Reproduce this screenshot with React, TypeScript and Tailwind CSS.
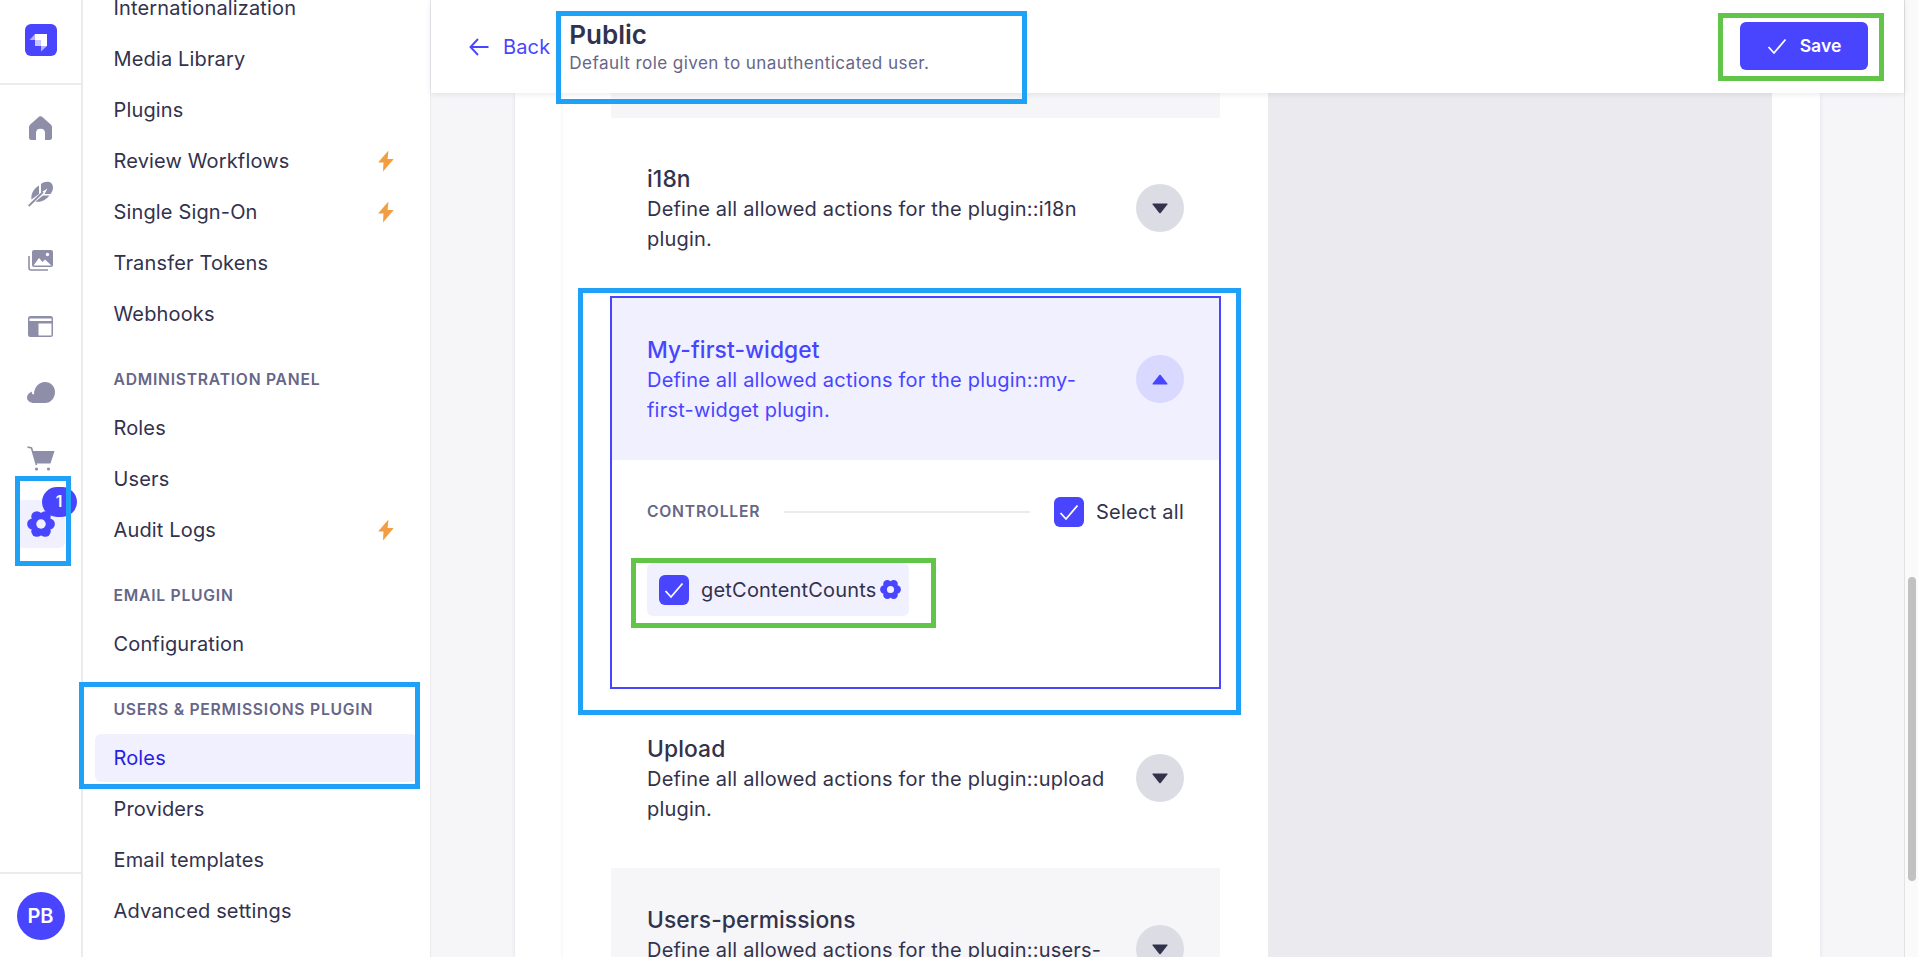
import React from "react";

const Gear = ({ size, hole, className }: { size: number; hole: string; className?: string }) => {
  const lobes = [0, 60, 120, 180, 240, 300].map((a) => {
    const r = (a * Math.PI) / 180;
    return { x: 13 + 7.7 * Math.cos(r), y: 13 + 7.7 * Math.sin(r) };
  });
  return (
    <svg width={size} height={size} viewBox="0 0 26 26" className={className}>
      {lobes.map((l, i) => (
        <circle key={i} cx={l.x} cy={l.y} r="5.2" fill="#4945ff" />
      ))}
      <circle cx="13" cy="13" r="8" fill="#4945ff" />
      <circle cx="13" cy="13" r="4.4" fill={hole} />
    </svg>
  );
};

const Bolt = () => (
  <svg width="16" height="22" viewBox="0 0 16 22" className="mr-[23px] ml-auto">
    <path d="M10.5 0.5 L0.5 12 Q0.2 12.6 1 12.6 H5.5 L5 21.5 L15.4 9.6 Q15.7 9 15 9 H9.6 Z" fill="#f29d41" />
  </svg>
);

const Check = ({ size = 20 }: { size?: number }) => (
  <svg width={size} height={size} viewBox="0 0 20 20" fill="none">
    <path d="M1.5 11 L7 17 L18.5 3.5" stroke="#fff" strokeWidth="1.8" />
  </svg>
);

const Box = () => (
  <span className="flex h-[30px] w-[30px] shrink-0 items-center justify-center rounded-[6px] bg-[#4945ff]">
    <Check size={20} />
  </span>
);

const Caret = ({ up, color }: { up?: boolean; color: string }) => (
  <svg width="16" height="11" viewBox="0 0 16 11" className={up ? "rotate-180" : ""}>
    <path d="M1 0.5 H15 Q15.9 0.5 15.4 1.4 L8.7 10 Q8 10.7 7.3 10 L0.6 1.4 Q0.1 0.5 1 0.5 Z" fill={color} />
  </svg>
);

const NavIcon = ({ children }: { children: React.ReactNode }) => (
  <div className="flex h-[48px] w-[48px] items-center justify-center">{children}</div>
);

const Item = ({ label, bolt, active }: { label: string; bolt?: boolean; active?: boolean }) => (
  <div
    className={
      active
        ? "mb-[3px] ml-[12px] mr-[13px] flex h-[48px] items-center rounded-[6px] bg-[#f0f0ff] pl-[18.5px] text-[20px] tracking-[0.15px] text-[#271fe0]"
        : "mb-[3px] ml-[12px] mr-[13px] flex h-[48px] items-center pl-[18.5px] text-[20px] tracking-[0.15px] text-[#32324d]"
    }
  >
    {label}
    {bolt && <Bolt />}
  </div>
);

const Label = ({ children }: { children: React.ReactNode }) => (
  <div className="mt-[29px] mb-[13px] flex h-[24px] items-center pl-[30.5px] pt-[2px] text-[15.7px] font-semibold tracking-[0.75px] text-[#666687]">
    {children}
  </div>
);

const Row = ({
  title,
  desc,
  open,
  grey,
  pt,
  h,
}: {
  title: string;
  desc: string;
  open?: boolean;
  grey?: boolean;
  pt: string;
  h: string;
}) => (
  <div
    className={`flex items-start justify-between ${open ? "px-[35px]" : "px-[36px]"} ${pt} ${h} ${
      open ? "bg-[#f0f0ff] text-[#4945ff]" : grey ? "bg-[#f6f6f9] text-[#32324d]" : "bg-white text-[#32324d]"
    }`}
  >
    <div className="w-[462px]">
      <div className="text-[22.8px] font-medium leading-[30px] tracking-[0.1px]">{title}</div>
      <div className="text-[20px] leading-[30px] tracking-[0.2px]">{desc}</div>
    </div>
    <div
      className={`mt-[20px] flex h-[48px] w-[48px] shrink-0 items-center justify-center rounded-full ${
        open ? "bg-[#d9d8ff]" : "bg-[#dcdce4]"
      }`}
    >
      <Caret up={open} color={open ? "#4945ff" : "#32324d"} />
    </div>
  </div>
);

export default function App() {
  return (
    <div className="relative flex h-[957px] w-[1918px] overflow-hidden bg-white [font-family:Inter,sans-serif]">
      {/* Main nav */}
      <nav className="flex w-[83px] shrink-0 flex-col border-r-2 border-[#eaeaef]">
        <div className="flex h-[85px] items-center justify-center border-b-2 border-[#eaeaef]">
          <svg width="32" height="32" viewBox="0 0 32 32" className="mb-[3px]">
            <rect width="32" height="32" rx="6" fill="#4945ff" />
            <path d="M10 10 H22 V22 H16 V16 H10 Z" fill="#fff" />
            <rect x="10" y="16" width="6" height="6" fill="#fff" opacity="0.7" />
            <path d="M10 10 V16 H4.5 Z" fill="#fff" opacity="0.6" />
            <path d="M16 22 H22 L16 27.5 Z" fill="#fff" opacity="0.6" />
          </svg>
        </div>
        <div className="flex flex-col items-center gap-[18px] pt-[19px]">
          <NavIcon>
            <svg width="23" height="24" viewBox="0 0 23 24">
              <path
                d="M10.2 .6 Q11.5 -.3 12.8 .6 L21.8 8.4 Q23 9.5 23 11 V21.5 Q23 24 20.5 24 H16 V17 Q16 12.7 11.5 12.7 Q7 12.7 7 17 V24 H2.5 Q0 24 0 21.5 V11 Q0 9.5 1.2 8.4 Z"
                fill="#8e8ea9"
              />
            </svg>
          </NavIcon>
          <NavIcon>
            <svg width="25" height="26" viewBox="0 0 25 26" fill="none">
              <path d="M3.5 18.5 C2.5 12.5 6 7.5 11 4.5 V13 Z" fill="#8e8ea9" />
              <path d="M13 11.5 V3 C17 -.5 25 -.5 25 6.5 C25 9 24 11 22.5 13 H16.5 L19.5 7.5 Z" fill="#8e8ea9" />
              <path d="M7.5 20.5 L15 14.5 H21.5 C18 18.5 13 22 7.5 20.5 Z" fill="#8e8ea9" />
              <path d="M.7 25 L15 11" stroke="#8e8ea9" strokeWidth="1.8" />
            </svg>
          </NavIcon>
          <NavIcon>
            <svg width="25" height="21" viewBox="0 0 25 21" fill="none">
              <path d="M1 6 V18 Q1 20 3 20 H20" stroke="#8e8ea9" strokeWidth="1.6" />
              <rect x="4" y="0" width="21" height="17" rx="2" fill="#8e8ea9" />
              <path d="M5.5 15.5 L11 8 L14.5 12 L17 9.5 L23.5 15.5 Z" fill="#fff" />
              <circle cx="19.5" cy="4.5" r="1.7" fill="#fff" />
            </svg>
          </NavIcon>
          <NavIcon>
            <svg width="25" height="21" viewBox="0 0 25 21">
              <rect width="25" height="21" rx="2.5" fill="#8e8ea9" />
              <rect x="1.5" y="2.5" width="22" height="2.5" fill="#fff" />
              <rect x="10.5" y="7.5" width="13" height="12" fill="#fff" />
            </svg>
          </NavIcon>
          <NavIcon>
            <svg width="28" height="21" viewBox="0 0 28 21">
              <path
                d="M7 21 C3 21 0 18.5 0 15.5 C0 12.5 2.5 10.5 5 9.5 C4.5 11 5 12.5 7 12.5 C7 5 12 0 18 0 C24 0 28 4.5 28 10 C28 16 24 21 18 21 Z"
                fill="#8e8ea9"
              />
            </svg>
          </NavIcon>
          <NavIcon>
            <svg width="28" height="25" viewBox="0 0 28 25" fill="none">
              <path d="M0.5 1 L4.5 2 L9.5 19" stroke="#8e8ea9" strokeWidth="1.6" />
              <path d="M5.5 5 H27.5 L23.5 17.5 H9.5 Z" fill="#8e8ea9" />
              <circle cx="9.5" cy="23" r="1.6" fill="#8e8ea9" />
              <circle cx="21.5" cy="23" r="1.6" fill="#8e8ea9" />
            </svg>
          </NavIcon>
          <div className="relative flex h-[48px] w-[48px] items-center justify-center rounded-[6px] bg-[#f0f0ff]">
            <Gear size={28} hole="#f0f0ff" />
            <span className="absolute -top-[13px] left-[25px] flex h-[30px] w-[35px] items-center justify-center rounded-full bg-[#4945ff] text-[15.7px] font-semibold text-white">
              1
            </span>
          </div>
        </div>
        <div className="mt-auto flex h-[85px] items-start justify-center border-t-2 border-[#eaeaef] pt-[18px]">
          <div className="flex h-[48px] w-[48px] items-center justify-center rounded-full bg-[#4945ff] text-[20px] font-semibold text-white">
            PB
          </div>
        </div>
      </nav>

      {/* Sub nav */}
      <aside className="w-[348px] shrink-0 overflow-hidden border-r border-[#eaeaef]">
        <div className="-mt-[16px]">
          <Item label="Internationalization" />
          <Item label="Media Library" />
          <Item label="Plugins" />
          <Item label="Review Workflows" bolt />
          <Item label="Single Sign-On" bolt />
          <Item label="Transfer Tokens" />
          <Item label="Webhooks" />
          <Label>ADMINISTRATION PANEL</Label>
          <Item label="Roles" />
          <Item label="Users" />
          <Item label="Audit Logs" bolt />
          <Label>EMAIL PLUGIN</Label>
          <Item label="Configuration" />
          <Label>USERS &amp; PERMISSIONS PLUGIN</Label>
          <Item label="Roles" active />
          <Item label="Providers" />
          <Item label="Email templates" />
          <Item label="Advanced settings" />
        </div>
      </aside>

      {/* Main */}
      <main className="flex min-w-0 flex-1 flex-col bg-[#f6f6f9]">
        <header className="relative z-10 flex h-[93px] shrink-0 items-center bg-white pl-[38px] pr-[36px] shadow-[0_1px_6px_rgba(33,33,52,0.1)]">
          <svg width="20" height="20" viewBox="0 0 20 20" fill="none">
            <path d="M19.5 10 H1.5 M9 2 L1.5 10 L9 18" stroke="#4945ff" strokeWidth="1.9" />
          </svg>
          <span className="ml-[14px] text-[20px] tracking-[0.15px] text-[#4945ff]">Back</span>
          <div className="ml-[19px] flex flex-col">
            <div className="text-[26px] font-semibold leading-[34px] text-[#32324d]">Public</div>
            <div className="-mt-[1px] text-[17.1px] leading-[24px] tracking-[0.41px] text-[#666687]">Default role given to unauthenticated user.</div>
          </div>
          <button className="ml-auto -mt-[1px] flex h-[48px] w-[128px] items-center justify-center gap-[13px] rounded-[6px] bg-[#4945ff] text-[17.6px] font-semibold text-white">
            <Check size={20} />
            Save
          </button>
        </header>
        <div className="flex min-h-0 flex-1 px-[84px]">
          <div className="flex flex-1 bg-white pl-[48px] pr-[48px] shadow-[0_1px_4px_rgba(33,33,52,0.1)]">
            <div className="w-[705px] shrink-0 overflow-hidden bg-white px-[48px] shadow-[-1px_0_3px_rgba(33,33,52,0.05)]">
              <div className="h-[25px] bg-[#f6f6f9]" />
              <Row
                title="i18n"
                desc="Define all allowed actions for the plugin::i18n plugin."
                pt="pt-[46px]"
                h="h-[178px]"
              />
              <div className="-mx-[1px] h-[393px] border-2 border-[#4945ff] bg-white">
                <Row
                  title="My-first-widget"
                  desc="Define all allowed actions for the plugin::my-first-widget plugin."
                  open
                  pt="pt-[37px]"
                  h="h-[162px]"
                />
                <div className="px-[35px] pt-[37px]">
                  <div className="flex h-[30px] items-center">
                    <span className="text-[15.7px] font-semibold tracking-[0.75px] text-[#666687]">CONTROLLER</span>
                    <div className="mx-[24px] h-[2px] flex-1 bg-[#eaeaef]" />
                    <Box />
                    <span className="ml-[12px] text-[20px] tracking-[0.25px] text-[#32324d]">Select all</span>
                  </div>
                  <div className="mt-[36px] inline-flex h-[53px] items-center gap-[12px] rounded-[6px] bg-[#f0f0ff] pl-[12px] pr-[8px]">
                    <Box />
                    <span className="flex items-center text-[20px] tracking-[0.2px] text-[#32324d]">
                      getContentCounts
                      <Gear size={21} hole="#f0f0ff" className="ml-[3px]" />
                    </span>
                  </div>
                </div>
              </div>
              <Row
                title="Upload"
                desc="Define all allowed actions for the plugin::upload plugin."
                pt="pt-[45px]"
                h="h-[179px]"
              />
              <Row
                title="Users-permissions"
                desc="Define all allowed actions for the plugin::users-permissions plugin."
                grey
                pt="pt-[37px]"
                h="h-[164px]"
              />
            </div>
            <div className="flex-1 bg-[#eaeaef]" />
          </div>
        </div>
      </main>

      {/* Scrollbar */}
      <div className="flex w-[14px] shrink-0 border-l border-[#e2e2e2] bg-[#fafafa] pl-[3px] pt-[577px]">
        <div className="h-[304px] w-[8px] rounded-[4px] bg-[#c1c1c1]" />
      </div>

      {/* Annotation rectangles over the screenshot */}
      <div className="absolute left-[15px] top-[476px] z-20 h-[90px] w-[56px] border-[5px] border-[#1ea1f7]" />
      <div className="absolute left-[79px] top-[682px] z-20 h-[107px] w-[341px] border-[5px] border-[#1ea1f7]" />
      <div className="absolute left-[556px] top-[11px] z-20 h-[93px] w-[471px] border-[5px] border-[#1ea1f7]" />
      <div className="absolute left-[578px] top-[288px] z-20 h-[427px] w-[663px] border-[5px] border-[#1ea1f7]" />
      <div className="absolute left-[1718px] top-[13px] z-20 h-[68px] w-[166px] border-[5px] border-[#62c449]" />
      <div className="absolute left-[631px] top-[558px] z-20 h-[70px] w-[305px] border-[5px] border-[#62c449]" />
    </div>
  );
}
